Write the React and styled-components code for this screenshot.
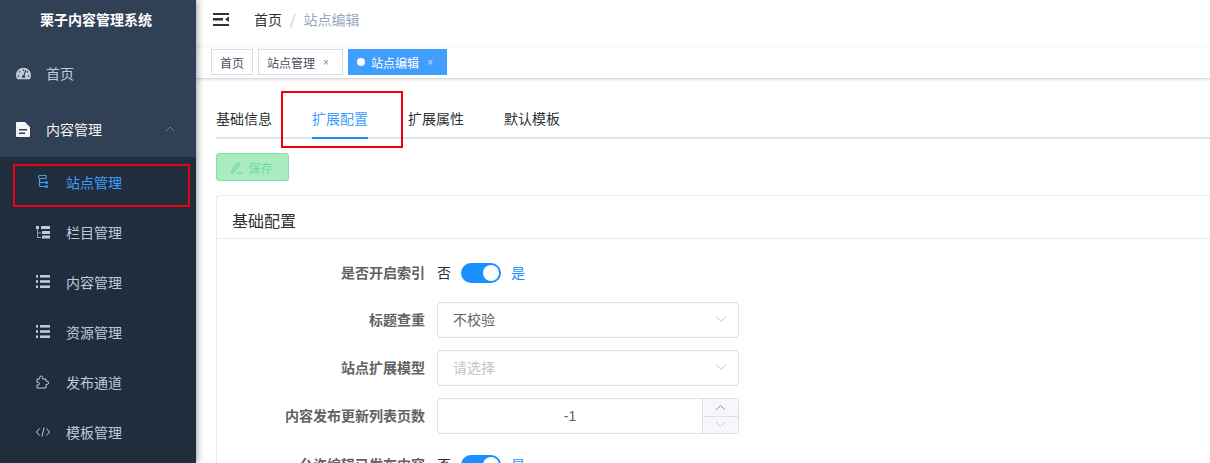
import React from 'react';
import styled, { createGlobalStyle } from 'styled-components';
import { FaTachometerAlt } from 'react-icons/fa';

const GlobalStyle = createGlobalStyle`
  html, body {
    margin: 0;
    padding: 0;
    height: 100%;
    overflow: hidden;
    background: #fff;
  }
  body {
    font-family: "Noto Sans CJK SC", "Liberation Sans", sans-serif;
    font-size: 14px;
    color: #606266;
  }
  #root { height: 100%; }
  * { box-sizing: border-box; }
`;

const Layout = styled.div`
  position: relative;
  display: flex;
  width: 1210px;
  height: 463px;
  overflow: hidden;
`;

const Sidebar = styled.aside`
  flex: 0 0 196px;
  display: flex;
  flex-direction: column;
  background: #304156;
  box-shadow: 2px 0 6px rgba(0, 21, 41, 0.35);
  z-index: 2;
`;

const Logo = styled.div`
  height: 45px;
  padding: 0 4px 8px 0;
  display: flex;
  align-items: center;
  justify-content: center;
  color: #fff;
  font-weight: 700;
  font-size: 14px;
`;

const TopItem = styled.div`
  height: 56px;
  padding-left: 16px;
  display: flex;
  align-items: center;
  color: ${props => (props.$open ? '#f4f4f5' : '#bfcbd9')};
`;

const TopIcon = styled.span`
  width: 30px;
  display: flex;
  align-items: center;
  font-size: 15px;
`;

const Arrow = styled.svg`
  margin-left: auto;
  margin-right: 21px;
  width: 10px;
  height: 6px;
`;

const SubMenu = styled.div`
  flex: 1;
  background: #1f2d3d;
`;

const SubItem = styled.div`
  height: 50px;
  padding-left: 36px;
  display: flex;
  align-items: center;
  color: ${props => (props.$active ? '#409eff' : '#bfcbd9')};
`;

const SubIcon = styled.svg`
  width: 14px;
  height: 14px;
  margin-right: 16px;
  flex: none;
`;

const Main = styled.main`
  flex: 1;
  min-width: 0;
  display: flex;
  flex-direction: column;
`;

const Navbar = styled.header`
  height: 46px;
  display: flex;
  align-items: center;
  padding: 0 0 8px 17px;
  box-shadow: 0 1px 4px rgba(0, 21, 41, 0.06);
`;

const Hamburger = styled.svg`
  width: 16px;
  height: 13px;
  margin-right: 25px;
`;

const Crumb = styled.span`
  color: ${props => (props.$muted ? '#97a8be' : '#303133')};
`;

const CrumbSep = styled.span`
  margin: 0 8px;
  color: #c0c4cc;
`;

const TagsBar = styled.div`
  height: 33px;
  display: flex;
  align-items: flex-start;
  gap: 5px;
  padding: 3px 0 0 15px;
  border-bottom: 1px solid #d8dce5;
  box-shadow: 0 1px 3px rgba(0, 0, 0, 0.12);
`;

const Tag = styled.div`
  height: 26px;
  padding: 0 8px;
  display: flex;
  align-items: center;
  font-size: 12px;
  border: 1px solid ${props => (props.$active ? '#409eff' : '#d8dce5')};
  background: ${props => (props.$active ? '#409eff' : '#fff')};
  color: ${props => (props.$active ? '#fff' : '#495060')};
`;

const TagDot = styled.span`
  width: 8px;
  height: 8px;
  margin-right: 6px;
  border-radius: 50%;
  background: #fff;
`;

const TagClose = styled.span`
  margin: 0 3px 0 6px;
  width: 10px;
  text-align: center;
  font-family: "Liberation Sans", sans-serif;
  font-size: 10px;
  opacity: 0.7;
`;

const Content = styled.div`
  flex: 1;
  padding: 21px 0 0 20px;
  overflow: hidden;
`;

const TabNav = styled.div`
  height: 39px;
  display: flex;
  border-bottom: 2px solid #dfe4ed;
`;

const Tab = styled.div`
  height: 39px;
  line-height: 36px;
  margin-left: ${props => props.$gap}px;
  color: ${props => (props.$active ? '#409eff' : '#303133')};
  border-bottom: 2px solid ${props => (props.$active ? '#1890ff' : 'transparent')};
`;

const SaveButton = styled.div`
  width: 73px;
  height: 28px;
  margin-top: 14px;
  padding-right: 2px;
  display: flex;
  align-items: center;
  justify-content: center;
  gap: 5px;
  font-size: 12px;
  color: #6fdc9c;
  background: #a9ecc1;
  border: 1px solid #80e2a7;
  border-radius: 3px;
`;

const Card = styled.section`
  margin-top: 14px;
  border: 1px solid #e6ebf5;
  border-right: 0;
  border-radius: 4px 0 0 0;
`;

const CardHeader = styled.div`
  height: 43px;
  padding: 6px 0 0 15px;
  line-height: 36px;
  font-size: 16px;
  color: #303133;
  border-bottom: 1px solid #e6ebf5;
`;

const CardBody = styled.div`
  padding: 16px 0 0;
`;

const Row = styled.div`
  display: flex;
  align-items: center;
  min-height: 36px;
  margin-bottom: ${props => props.$mb ?? 12}px;
`;

const Label = styled.label`
  width: 220px;
  padding: 0 12px 2px 0;
  text-align: right;
  font-weight: 700;
  font-size: 14px;
  color: #606266;
  flex: none;
`;

const SwitchText = styled.span`
  padding-bottom: 2px;
  color: ${props => (props.$on ? '#1890ff' : '#303133')};
`;

const Switch = styled.span`
  width: 40px;
  height: 20px;
  margin: 0 10px;
  padding: 2px;
  display: flex;
  justify-content: flex-end;
  border-radius: 10px;
  background: #1890ff;

  &::after {
    content: '';
    width: 16px;
    height: 16px;
    border-radius: 50%;
    background: #fff;
  }
`;

const Select = styled.div`
  width: 302px;
  height: 36px;
  padding: 0 15px 2px;
  display: flex;
  align-items: center;
  justify-content: space-between;
  border: 1px solid #dcdfe6;
  border-radius: 4px;
  color: ${props => (props.$placeholder ? '#c0c4cc' : '#606266')};
`;

const Caret = styled.svg`
  width: 12px;
  height: 12px;
  margin-right: -4px;
`;

const NumberInput = styled.div`
  width: 302px;
  height: 36px;
  display: flex;
  border: 1px solid #dcdfe6;
  border-radius: 4px;
  overflow: hidden;
`;

const NumberValue = styled.div`
  flex: 1;
  display: flex;
  align-items: center;
  justify-content: center;
  font-family: "Liberation Sans", sans-serif;
  color: #606266;
`;

const Steppers = styled.div`
  width: 36px;
  display: flex;
  flex-direction: column;
  border-left: 1px solid #dcdfe6;
  background: #f5f7fa;
`;

const Step = styled.div`
  flex: 1;
  display: flex;
  align-items: center;
  justify-content: center;

  & + & {
    border-top: 1px solid #dcdfe6;
  }
`;

const Highlight = styled.div`
  position: absolute;
  left: ${props => props.$x}px;
  top: ${props => props.$y}px;
  width: ${props => props.$w}px;
  height: ${props => props.$h}px;
  border: 2px solid #ee0010;
  z-index: 5;
`;

const DocIcon = styled.svg`
  width: 14px;
  height: 15px;
`;

const SiteIcon = () => (
  <SubIcon viewBox="0 0 14 14" fill="none" stroke="#409eff" strokeWidth="1.2">
    <rect x="2.500" y="0.500" width="8" height="3" rx="1.500" />
    <path d="M3.500 3.500v7a1 1 0 0 0 1 1h5M3.500 7.500h6" />
    <circle cx="10.500" cy="7.500" r="1" />
    <circle cx="10.500" cy="11.500" r="1" />
  </SubIcon>
);

const ColumnIcon = () => (
  <SubIcon viewBox="0 0 14 14" fill="#bfcbd9">
    <rect x="0" y="1" width="3" height="3" />
    <path d="M1 4h1v8h3v1H1zM2 7.500h3v1H2z" opacity="0.75" />
    <rect x="5" y="1" width="9" height="3" />
    <rect x="6" y="6" width="8" height="3" />
    <rect x="6" y="10.500" width="8" height="3" />
  </SubIcon>
);

const ListIcon = () => (
  <SubIcon viewBox="0 0 14 14" fill="#bfcbd9">
    <rect x="0" y="0" width="2" height="2.600" />
    <rect x="4" y="0" width="10" height="2.600" />
    <rect x="0" y="5.200" width="2" height="2.600" />
    <rect x="4" y="5.200" width="10" height="2.600" />
    <rect x="0" y="10.400" width="2" height="2.600" />
    <rect x="4" y="10.400" width="10" height="2.600" />
  </SubIcon>
);

const PuzzleIcon = () => (
  <SubIcon viewBox="0 0 14 14" fill="none" stroke="#bfcbd9" strokeWidth="1">
    <path d="M1 4h2.700V2.500a1.500 1.500 0 0 1 3 0V4H10v2.200h1a1.600 1.600 0 0 1 0 3.200h-1V13H1V10h1.200a1.300 1.300 0 0 0 0-2.600H1z" />
  </SubIcon>
);

const CodeIcon = () => (
  <SubIcon viewBox="0 0 14 14" fill="none" stroke="#bfcbd9" strokeWidth="1">
    <path d="M3.500 3.500 0.500 7l3 3.500M10.500 3.500l3 3.500-3 3.500M8 2.500 6 11.500" />
  </SubIcon>
);

const CaretDown = ({ color = '#c0c4cc' }) => (
  <Caret viewBox="0 0 12 12" fill="none" stroke={color} strokeWidth="1">
    <path d="M1 3.500 6 8.500l5-5" />
  </Caret>
);

const StepArrow = ({ up, color }) => (
  <svg width="11" height="7" viewBox="0 0 11 7" fill="none" stroke={color} strokeWidth="1">
    <path d={up ? 'M1 6 5.500 1.500 10 6' : 'M1 1l4.500 4.500L10 1'} />
  </svg>
);

const EditIcon = () => (
  <svg width="13" height="13" viewBox="0 0 13 13" fill="none" stroke="#6fdc9c" strokeWidth="1.200">
    <path d="M2 9 8 2l2 1.500-6 7-2.500 1z" />
    <path d="M7 12h5.500" />
  </svg>
);

const subItems = [
  { label: '站点管理', icon: <SiteIcon />, active: true },
  { label: '栏目管理', icon: <ColumnIcon /> },
  { label: '内容管理', icon: <ListIcon /> },
  { label: '资源管理', icon: <ListIcon /> },
  { label: '发布通道', icon: <PuzzleIcon /> },
  { label: '模板管理', icon: <CodeIcon /> },
];

export default function App() {
  return (
    <Layout>
      <GlobalStyle />
      <Sidebar>
        <Logo>栗子内容管理系统</Logo>
        <TopItem>
          <TopIcon><FaTachometerAlt /></TopIcon>
          首页
        </TopItem>
        <TopItem $open>
          <TopIcon>
            <DocIcon viewBox="0 0 14 15">
              <path
                fill="#f4f4f5"
                fillRule="evenodd"
                d="M1 0h8l5 5v9a1 1 0 0 1-1 1H1a1 1 0 0 1-1-1V1a1 1 0 0 1 1-1zM3 7v1.500h8V7zM3 10.500V12h6v-1.500z"
              />
            </DocIcon>
          </TopIcon>
          内容管理
          <Arrow viewBox="0 0 10 6" fill="none" stroke="#6f7b89" strokeWidth="1">
            <path d="M0.500 5.500 5 1l4.500 4.500" />
          </Arrow>
        </TopItem>
        <SubMenu>
          {subItems.map(item => (
            <SubItem key={item.label} $active={item.active}>
              {item.icon}
              {item.label}
            </SubItem>
          ))}
        </SubMenu>
      </Sidebar>

      <Main>
        <Navbar>
          <Hamburger viewBox="0 0 16 13" fill="#303133">
            <rect x="0" y="0" width="16" height="2" />
            <rect x="0" y="5" width="10" height="2.500" />
            <rect x="0" y="11" width="16" height="2" />
            <path d="M16 3.500v5.500l-4-2.700z" />
          </Hamburger>
          <Crumb>首页</Crumb>
          <CrumbSep>/</CrumbSep>
          <Crumb $muted>站点编辑</Crumb>
        </Navbar>

        <TagsBar>
          <Tag>首页</Tag>
          <Tag>站点管理<TagClose>×</TagClose></Tag>
          <Tag $active><TagDot />站点编辑<TagClose>×</TagClose></Tag>
        </TagsBar>

        <Content>
          <TabNav>
            <Tab $gap={0}>基础信息</Tab>
            <Tab $gap={40} $active>扩展配置</Tab>
            <Tab $gap={40}>扩展属性</Tab>
            <Tab $gap={40}>默认模板</Tab>
          </TabNav>

          <SaveButton><EditIcon />保存</SaveButton>

          <Card>
            <CardHeader>基础配置</CardHeader>
            <CardBody>
              <Row $mb={11}>
                <Label>是否开启索引</Label>
                <SwitchText>否</SwitchText>
                <Switch />
                <SwitchText $on>是</SwitchText>
              </Row>
              <Row>
                <Label>标题查重</Label>
                <Select>不校验<CaretDown /></Select>
              </Row>
              <Row>
                <Label>站点扩展模型</Label>
                <Select $placeholder>请选择<CaretDown /></Select>
              </Row>
              <Row $mb={13}>
                <Label>内容发布更新列表页数</Label>
                <NumberInput>
                  <NumberValue>-1</NumberValue>
                  <Steppers>
                    <Step><StepArrow up color="#b88a7a" /></Step>
                    <Step><StepArrow color="#c0c4cc" /></Step>
                  </Steppers>
                </NumberInput>
              </Row>
              <Row>
                <Label>允许编辑已发布内容</Label>
                <SwitchText>否</SwitchText>
                <Switch />
                <SwitchText $on>是</SwitchText>
              </Row>
            </CardBody>
          </Card>
        </Content>
      </Main>

      <Highlight $x={13} $y={164} $w={177} $h={43} />
      <Highlight $x={281} $y={91} $w={122} $h={57} />
    </Layout>
  );
}
